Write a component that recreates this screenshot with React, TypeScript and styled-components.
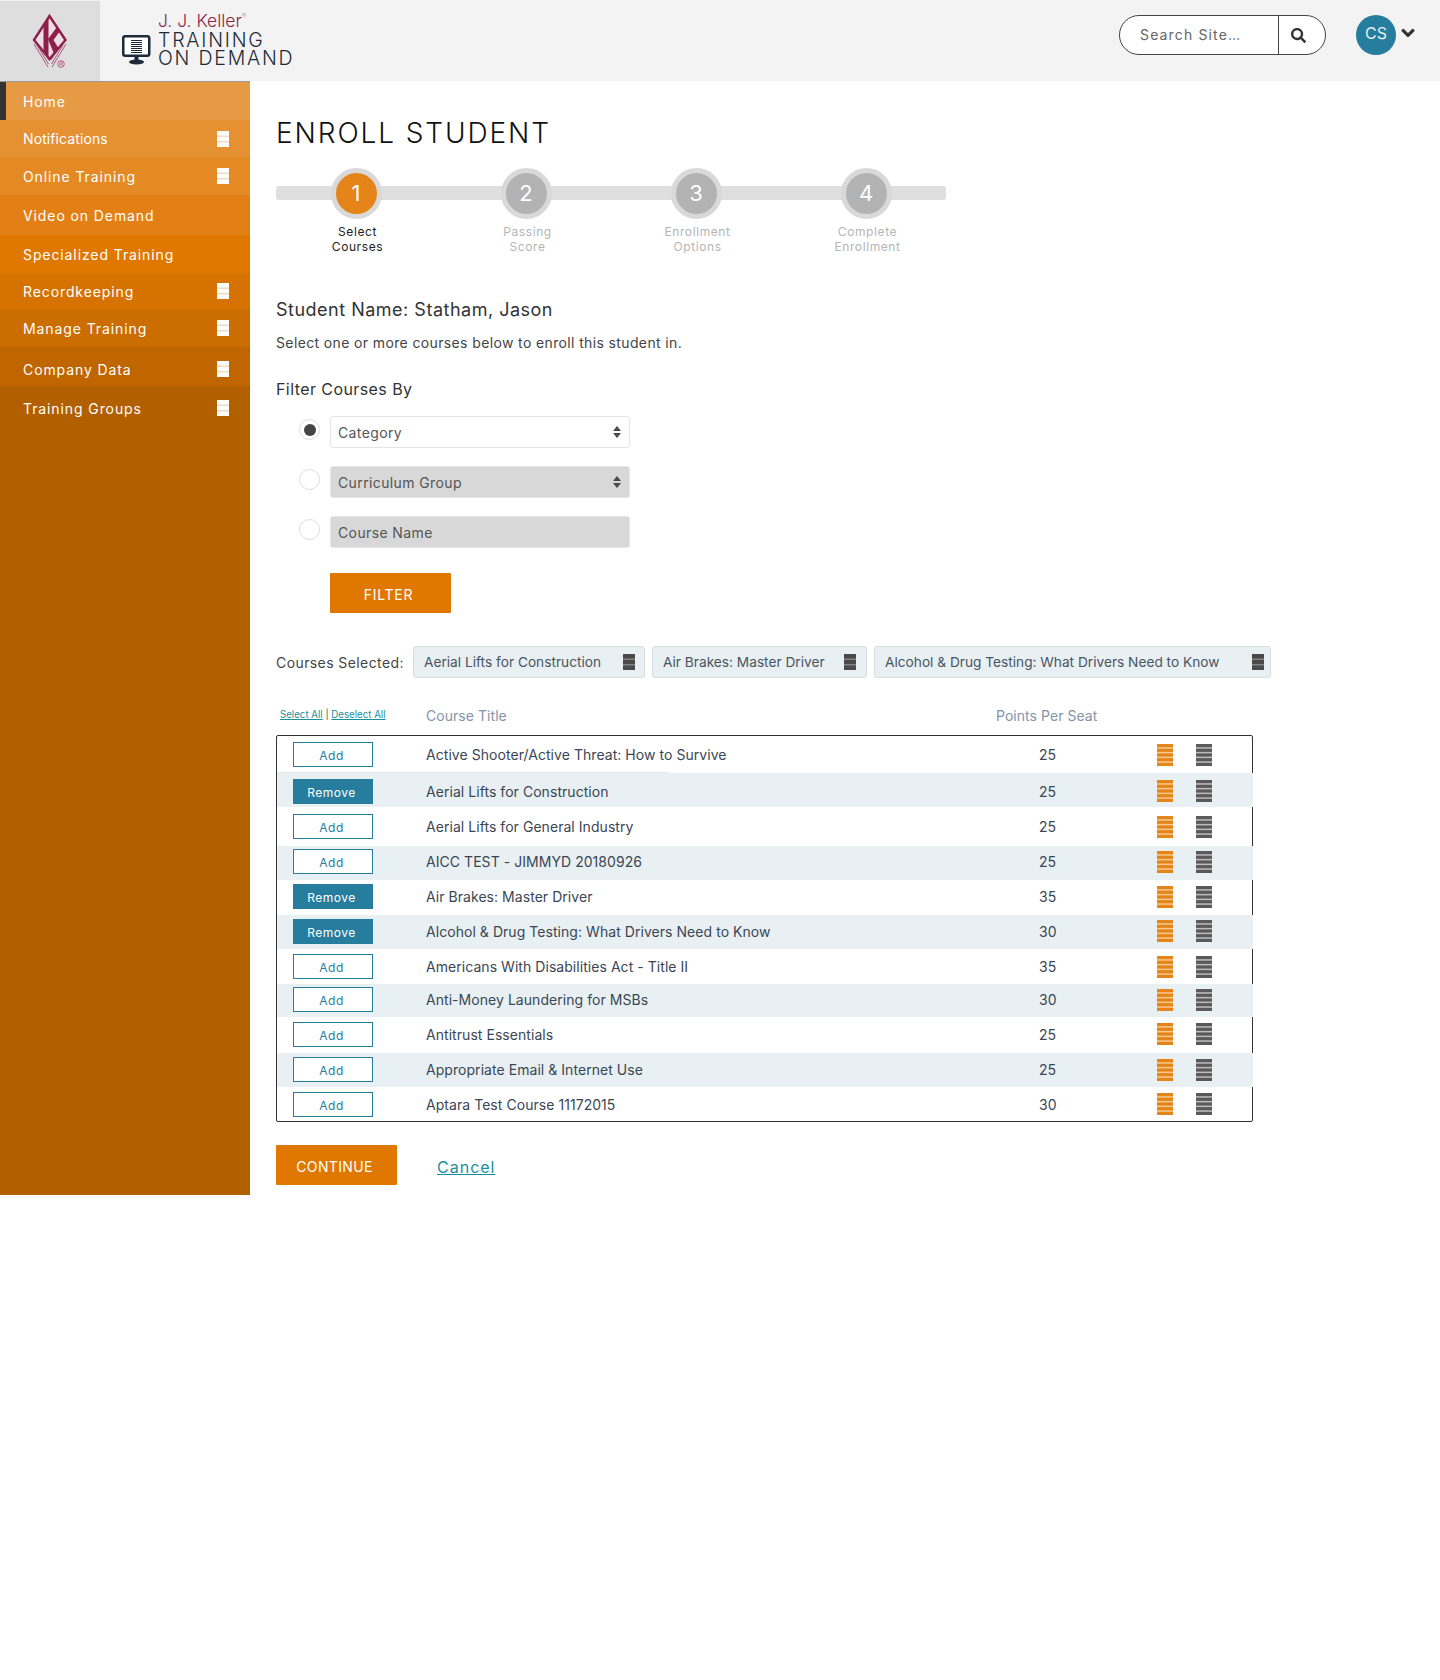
import React from 'react';
import styled, { createGlobalStyle } from 'styled-components';
import { FaChevronDown, FaSearch } from 'react-icons/fa';

const GlobalStyle = createGlobalStyle`
  html, body { margin: 0; padding: 0; background: #fff; }
  body { font-family: Inter, "Liberation Sans", sans-serif; color: #444; min-height: 1680px; }
  * { box-sizing: border-box; }
`;

const Page = styled.div`
  width: 1440px;
`;

const Header = styled.header`
  height: 81px;
  padding-top: 1px;
  background: #f3f3f3;
  display: flex;
  align-items: stretch;
`;

const LogoBox = styled.div`
  width: 100px;
  background: #dedede;
  display: flex;
  align-items: center;
  justify-content: center;
`;

const Brand = styled.div`
  margin-left: 22px;
  display: flex;
  align-items: flex-end;
  gap: 7px;
  padding-bottom: 14px;
  svg { margin-bottom: 2px; }
`;

const BrandText = styled.div`
  display: flex;
  flex-direction: column;
`;

const Keller = styled.div`
  color: #8e1f47;
  font-size: 17.5px;
  line-height: 20px;
  font-weight: 300;
  sup { font-size: 7px; color: #aaa; vertical-align: 8px; line-height: 0; }
`;

const Product = styled.div`
  color: #1e2a38;
  font-size: 19.5px;
  line-height: 18px;
  font-weight: 300;
  letter-spacing: 1.8px;
`;

const HeaderRight = styled.div`
  margin-left: auto;
  display: flex;
  align-items: flex-start;
  padding: 14px 25px 0 0;
`;

const Search = styled.div`
  width: 207px;
  height: 40px;
  border: 1px solid #444;
  border-radius: 20px;
  background: #fff;
  display: flex;
  overflow: hidden;
`;

const SearchText = styled.div`
  width: 158px;
  padding-left: 20px;
  font-size: 14px;
  line-height: 38px;
  letter-spacing: 1.15px;
  color: #666;
`;

const SearchButton = styled.div`
  flex: 1;
  padding-right: 7px;
  border-left: 1px solid #444;
  display: flex;
  align-items: center;
  justify-content: center;
  color: #333;
  font-size: 15px;
`;

const Avatar = styled.div`
  margin-left: 30px;
  width: 40px;
  height: 40px;
  border-radius: 50%;
  background: #267d9e;
  color: #e8f0f3;
  font-size: 16px;
  line-height: 37px;
  text-align: center;
`;

const Caret = styled.div`
  margin: 11px 0 0 5px;
  font-size: 14px;
  color: #333;
  line-height: 14px;
  svg { stroke: currentColor; stroke-width: 40px; }
`;

const Body = styled.div`
  display: flex;
  align-items: stretch;
`;

const Sidebar = styled.nav`
  width: 250px;
  flex: none;
  background: #b25f00;
  border-top: 1px solid #999;
`;

const NavRow = styled.div<{ $bg: string; $h: number; $pt: number; $active?: boolean; $tight?: boolean }>`
  height: ${p => p.$h}px;
  background: ${p => p.$bg};
  border-left: ${p => (p.$active ? '6px solid #333' : 'none')};
  padding: ${p => p.$pt}px 21px 0 ${p => (p.$active ? 17 : 23)}px;
  display: flex;
  align-items: center;
  justify-content: space-between;
  color: #fff;
  font-size: 14px;
  letter-spacing: ${p => (p.$tight ? 0.1 : 0.9)}px;
`;

const Main = styled.main`
  flex: 1;
  padding: 35px 0 10px 26px;
`;

const Title = styled.h1`
  margin: 0;
  font-size: 28px;
  line-height: 34px;
  font-weight: 300;
  letter-spacing: 1.9px;
  color: #111;
`;

const Stepper = styled.div`
  margin-top: 18px;
  width: 670px;
  position: relative;
`;

const Track = styled.div`
  position: absolute;
  left: 0;
  right: 0;
  top: 18px;
  height: 14px;
  border-radius: 3px;
  background: #dfdfdf;
`;

const Steps = styled.div`
  position: relative;
  display: flex;
  margin-left: -5px;
`;

const Step = styled.div`
  flex: none;
  width: 170px;
  display: flex;
  flex-direction: column;
  align-items: center;
`;

const StepCircle = styled.div<{ $on?: boolean }>`
  width: 51px;
  height: 51px;
  border-radius: 50%;
  border: 5px solid #d9d9d9;
  background: ${p => (p.$on ? '#e58519' : '#b3b3b3')};
  color: #fff;
  font-size: 22px;
  line-height: 41px;
  text-align: center;
`;

const StepLabel = styled.div<{ $on?: boolean }>`
  margin: 5px 0 0 3px;
  font-size: 12px;
  line-height: 15px;
  letter-spacing: 0.6px;
  text-align: center;
  color: ${p => (p.$on ? '#222' : '#b5b5b5')};
`;

const StudentName = styled.h2`
  margin: 44px 0 0;
  font-size: 18px;
  line-height: 24px;
  font-weight: 400;
  letter-spacing: 0.5px;
  color: #333;
`;

const Hint = styled.p`
  margin: 11px 0 0;
  font-size: 14px;
  line-height: 20px;
  letter-spacing: 0.37px;
  color: #444;
`;

const FilterTitle = styled.h3`
  margin: 25px 0 0;
  font-size: 16px;
  line-height: 22px;
  font-weight: 400;
  letter-spacing: 0.42px;
  color: #333;
`;

const FilterRows = styled.div`
  margin: 16px 0 0 23px;
  display: flex;
  flex-direction: column;
  gap: 18px;
`;

const FilterRow = styled.div`
  display: flex;
  gap: 10px;
`;

const Radio = styled.div<{ $on?: boolean }>`
  width: 21px;
  height: 21px;
  margin-top: 3px;
  border-radius: 50%;
  border: 1px solid #ddd;
  background: #fff;
  display: flex;
  align-items: center;
  justify-content: center;
  &::after {
    content: '';
    display: ${p => (p.$on ? 'block' : 'none')};
    width: 12px;
    height: 12px;
    border-radius: 50%;
    background: #444;
  }
`;

const Field = styled.div<{ $off?: boolean }>`
  width: 300px;
  height: 32px;
  padding: 0 8px 0 7px;
  border: 1px solid #e4e4ea;
  border-radius: 3px;
  background: ${p => (p.$off ? '#d8d8d8' : '#fff')};
  display: flex;
  align-items: center;
  justify-content: space-between;
  font-size: 14px;
  letter-spacing: 0.38px;
  color: #555;
`;

const OrangeButton = styled.button`
  display: block;
  width: 121px;
  height: 40px;
  border: none;
  border-radius: 1px;
  background: #e07800;
  color: #fff;
  font-family: inherit;
  font-size: 14px;
  letter-spacing: 0.35px;
  padding: 2px 4px 0 0;
`;

const FilterButton = styled(OrangeButton)`
  margin: 25px 0 0 54px;
  letter-spacing: 0.7px;
`;

const Selected = styled.div`
  margin-top: 33px;
  display: flex;
  align-items: center;
  gap: 7px;
`;

const SelectedLabel = styled.div`
  width: 130px;
  font-size: 14px;
  letter-spacing: 0.41px;
  color: #444;
`;

const Chip = styled.div<{ $w: number; $pr: number }>`
  width: ${p => p.$w}px;
  height: 32px;
  padding: 0 ${p => p.$pr}px 0 10px;
  border: 1px solid #d8dde0;
  border-radius: 3px;
  background: #e8f0f3;
  display: flex;
  align-items: center;
  justify-content: space-between;
  font-size: 13.7px;
  white-space: nowrap;
  color: #4a5560;
`;

const TableHead = styled.div`
  margin-top: 27px;
  display: grid;
  grid-template-columns: 150px 570px auto;
  align-items: center;
  height: 20px;
  font-size: 14px;
  letter-spacing: 0.05px;
  color: #8494a8;
`;

const SelectLinks = styled.div`
  padding: 0 0 2px 4px;
  font-size: 9.7px;
  letter-spacing: 0;
  color: #555;
  a { color: #1a8f9a; text-decoration: underline; }
`;

const Table = styled.div`
  margin-top: 10px;
  width: 977px;
  border: 1px solid #333;
  border-radius: 2px;
`;

const Row = styled.div<{ $h: number; $shift: number; $striped?: boolean }>`
  position: relative;
  height: ${p => p.$h}px;
  margin-right: ${p => (p.$striped ? -1 : 0)}px;
  padding: ${p => Math.max(p.$shift, 0)}px 0 ${p => Math.max(-p.$shift, 0)}px 16px;
  background: ${p => (p.$striped ? '#e8f0f3' : 'transparent')};
  display: grid;
  grid-template-columns: 133px 613px 118px 39px 16px;
  align-items: center;
  font-size: 14px;
  letter-spacing: 0.05px;
  color: #3b4654;
`;

const RowRule = styled.div`
  position: absolute;
  left: 0;
  bottom: 0;
  width: 391px;
  height: 1px;
  background: #e4e8ea;
`;

const RowButton = styled.div<{ $remove?: boolean }>`
  width: 80px;
  height: 25px;
  padding-right: 3px;
  border: 1px solid #267d9e;
  background: ${p => (p.$remove ? '#267d9e' : '#fff')};
  color: ${p => (p.$remove ? '#fff' : '#267d9e')};
  font-size: 12px;
  line-height: 25px;
  letter-spacing: 0.5px;
  text-align: center;
`;

const Actions = styled.div`
  margin-top: 23px;
  display: flex;
  align-items: center;
  gap: 40px;
`;

const CancelLink = styled.a`
  margin-top: 3px;
  font-size: 16px;
  letter-spacing: 1px;
  color: #1a8f9a;
  text-decoration: underline;
`;

const BarsIcon: React.FC<{ w: number; h: number; bars: number; gap: number; color: string; gapColor: string }> = ({ w, h, bars, gap, color, gapColor }) => {
  const bar = (h - gap * (bars - 1)) / bars;
  return (
    <svg width={w} height={h} viewBox={`0 0 ${w} ${h}`}>
      <rect width={w} height={h} fill={gapColor} />
      {Array.from({ length: bars }, (_, i) => (
        <rect key={i} y={i * (bar + gap)} width={w} height={bar} fill={color} />
      ))}
    </svg>
  );
};

const KLogo = () => (
  <svg width="36" height="56" viewBox="0 0 36 56" fill="none">
    <path d="M2 31 L16 54 M5 32 L16.500 51 M8 33 L17 47 M34 31 L20 54 M31 32 L19.500 51 M28 33 L19 47" stroke="#a5486a" strokeWidth="0.9" />
    <path d="M17.500 3 L33.500 27 L17.500 46 L2 27 Z" fill="#ecdde2" stroke="#8e1f47" strokeWidth="2.400" strokeLinejoin="miter" />
    <path d="M11.500 11 L16.500 5 V44 L11.500 37 Z" fill="#8e1f47" />
    <path d="M16 26 L25 14 L28 18 L21.500 27 L27 36 L22.500 42 Z" fill="#8e1f47" />
    <circle cx="29" cy="51" r="3.300" stroke="#a5486a" strokeWidth="0.8" />
    <path d="M28 53 v-4 h1.500 a1 1 0 0 1 0 2 h-1.500 M29.500 51 l1 2" stroke="#a5486a" strokeWidth="0.6" />
  </svg>
);

const MonitorIcon = () => (
  <svg width="29" height="30" viewBox="0 0 29 30" fill="none">
    <rect x="1.250" y="1.250" width="26" height="19.500" rx="2" fill="#fff" stroke="#1e2a38" strokeWidth="2.500" />
    <path d="M9 5.500 h11 M9 7.500 h11 M9 9.500 h11 M9 11.500 h11 M9 13.500 h11 M9 15.500 h11 M9 17.500 h11" stroke="#1e2a38" strokeWidth="1" />
    <path d="M12.500 22 h4 v4 h-4 Z" fill="#1e2a38" />
    <ellipse cx="14.500" cy="27" rx="7.500" ry="2.500" fill="#1e2a38" />
  </svg>
);

const SortArrows = () => (
  <svg width="8" height="12" viewBox="0 0 8 12">
    <path d="M4 0 L8 5 H0 Z M0 7 H8 L4 12 Z" fill="#4a4a4a" />
  </svg>
);

const navItems = [
  { label: 'Home', bg: '#e69a43', h: 38, pt: 0, active: true },
  { label: 'Notifications', bg: '#e59033', h: 37, pt: 0, icon: true, tight: true },
  { label: 'Online Training', bg: '#e38a25', h: 38, pt: 0, icon: true },
  { label: 'Video on Demand', bg: '#e28015', h: 40, pt: 0 },
  { label: 'Specialized Training', bg: '#e07800', h: 38, pt: 0 },
  { label: 'Recordkeeping', bg: '#d67200', h: 36, pt: 0, icon: true },
  { label: 'Manage Training', bg: '#cb6d00', h: 38, pt: 0, icon: true },
  { label: 'Company Data', bg: '#c06600', h: 39, pt: 5, icon: true },
  { label: 'Training Groups', bg: '#b25f00', h: 44, pt: 0, icon: true },
];

const steps = [
  { n: 1, a: 'Select', b: 'Courses', on: true },
  { n: 2, a: 'Passing', b: 'Score' },
  { n: 3, a: 'Enrollment', b: 'Options' },
  { n: 4, a: 'Complete', b: 'Enrollment' },
];

const chips = [
  { label: 'Aerial Lifts for Construction', w: 232, pr: 9 },
  { label: 'Air Brakes: Master Driver', w: 215, pr: 10 },
  { label: 'Alcohol & Drug Testing: What Drivers Need to Know', w: 397, pr: 6 },
];

const courses = [
  { title: 'Active Shooter/Active Threat: How to Survive', pts: 25, h: 37, shift: 0 },
  { title: 'Aerial Lifts for Construction', pts: 25, h: 34, shift: 2, picked: true },
  { title: 'Aerial Lifts for General Industry', pts: 25, h: 39, shift: 0 },
  { title: 'AICC TEST - JIMMYD 20180926', pts: 25, h: 34, shift: -3 },
  { title: 'Air Brakes: Master Driver', pts: 35, h: 35, shift: -2, picked: true },
  { title: 'Alcohol & Drug Testing: What Drivers Need to Know', pts: 30, h: 34, shift: -2, picked: true },
  { title: 'Americans With Disabilities Act - Title II', pts: 35, h: 35, shift: 0 },
  { title: 'Anti-Money Laundering for MSBs', pts: 30, h: 33, shift: -2 },
  { title: 'Antitrust Essentials', pts: 25, h: 36, shift: -2 },
  { title: 'Appropriate Email & Internet Use', pts: 25, h: 34, shift: -1 },
  { title: 'Aptara Test Course 11172015', pts: 30, h: 34, shift: 0 },
];

const stripedRows = [1, 3, 5, 7, 9];

export default function App() {
  return (
    <Page>
      <GlobalStyle />
      <Header>
        <LogoBox><KLogo /></LogoBox>
        <Brand>
          <MonitorIcon />
          <BrandText>
            <Keller>J. J. Keller<sup>®</sup></Keller>
            <Product>TRAINING</Product>
            <Product>ON DEMAND</Product>
          </BrandText>
        </Brand>
        <HeaderRight>
          <Search>
            <SearchText>Search Site…</SearchText>
            <SearchButton><FaSearch /></SearchButton>
          </Search>
          <Avatar>CS</Avatar>
          <Caret><FaChevronDown /></Caret>
        </HeaderRight>
      </Header>
      <Body>
        <Sidebar>
          {navItems.map(item => (
            <NavRow key={item.label} $bg={item.bg} $h={item.h} $pt={item.pt} $active={item.active} $tight={item.tight}>
              {item.label}
              {item.icon && <BarsIcon w={12} h={16} bars={3} gap={1} color="#fff" gapColor="#f0c89a" />}
            </NavRow>
          ))}
        </Sidebar>
        <Main>
          <Title>ENROLL STUDENT</Title>
          <Stepper>
            <Track />
            <Steps>
              {steps.map(s => (
                <Step key={s.n}>
                  <StepCircle $on={s.on}>{s.n}</StepCircle>
                  <StepLabel $on={s.on}>{s.a}<br />{s.b}</StepLabel>
                </Step>
              ))}
            </Steps>
          </Stepper>
          <StudentName>Student Name: Statham, Jason</StudentName>
          <Hint>Select one or more courses below to enroll this student in.</Hint>
          <FilterTitle>Filter Courses By</FilterTitle>
          <FilterRows>
            <FilterRow>
              <Radio $on />
              <Field>Category<SortArrows /></Field>
            </FilterRow>
            <FilterRow>
              <Radio />
              <Field $off>Curriculum Group<SortArrows /></Field>
            </FilterRow>
            <FilterRow>
              <Radio />
              <Field $off>Course Name</Field>
            </FilterRow>
          </FilterRows>
          <FilterButton>FILTER</FilterButton>
          <Selected>
            <SelectedLabel>Courses Selected:</SelectedLabel>
            {chips.map(c => (
              <Chip key={c.label} $w={c.w} $pr={c.pr}>
                {c.label}
                <BarsIcon w={12} h={16} bars={3} gap={1} color="#4a4a4a" gapColor="#a0a0a0" />
              </Chip>
            ))}
          </Selected>
          <TableHead>
            <SelectLinks><a>Select All</a> | <a>Deselect All</a></SelectLinks>
            <div>Course Title</div>
            <div>Points Per Seat</div>
          </TableHead>
          <Table>
            {courses.map((c, i) => (
              <Row key={c.title} $h={c.h} $shift={c.shift} $striped={stripedRows.includes(i)}>
                {i === 0 && <RowRule />}
                <RowButton $remove={c.picked}>{c.picked ? 'Remove' : 'Add'}</RowButton>
                <div>{c.title}</div>
                <div>{c.pts}</div>
                <BarsIcon w={16} h={22} bars={5} gap={1.5} color="#e58519" gapColor="#f5c98f" />
                <BarsIcon w={16} h={22} bars={5} gap={1.5} color="#5a5a5a" gapColor="#bdbdbd" />
              </Row>
            ))}
          </Table>
          <Actions>
            <OrangeButton>CONTINUE</OrangeButton>
            <CancelLink>Cancel</CancelLink>
          </Actions>
        </Main>
      </Body>
    </Page>
  );
}
